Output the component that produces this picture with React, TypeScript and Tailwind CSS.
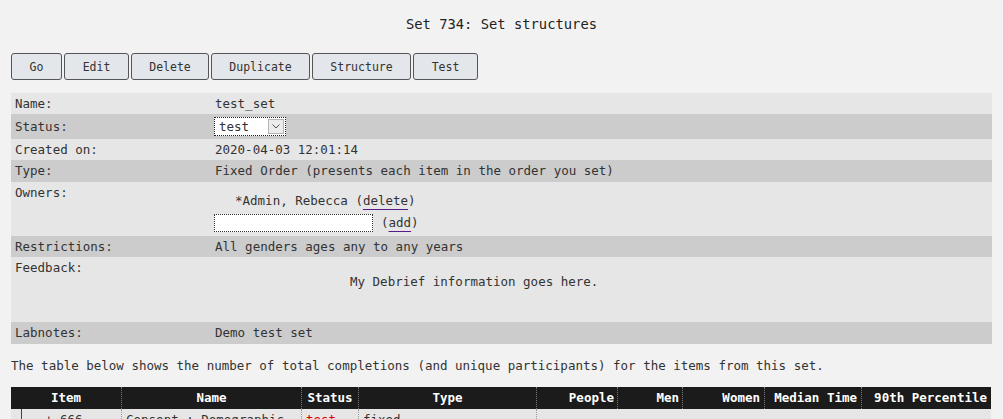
import React from "react";

const buttons: { label: string; w: string }[] = [
  { label: "Go", w: "w-[51px]" },
  { label: "Edit", w: "w-[65px]" },
  { label: "Delete", w: "w-[78px]" },
  { label: "Duplicate", w: "w-[99px]" },
  { label: "Structure", w: "w-[99px]" },
  { label: "Test", w: "w-[65px]" },
];

function Row({
  label,
  dark,
  h,
  children,
  top,
}: {
  label: string;
  dark?: boolean;
  h: string;
  children?: React.ReactNode;
  top?: boolean;
}) {
  return (
    <div className={`flex ${h} ${dark ? "bg-[#cccccc]" : "bg-[#e6e6e6]"}`}>
      <div className={`w-[200px] shrink-0 pl-[4px] flex ${top ? "items-start pt-[2px]" : "items-center"}`}>
        {label}
      </div>
      <div className={`flex-1 pl-[4px] flex ${top ? "flex-col" : "items-center"}`}>{children}</div>
    </div>
  );
}

const headers: { label: string; align: string }[] = [
  { label: "Item", align: "justify-center" },
  { label: "Name", align: "justify-center" },
  { label: "Status", align: "justify-center" },
  { label: "Type", align: "justify-center" },
  { label: "People", align: "justify-end pr-[3px]" },
  { label: "Men", align: "justify-end pr-[3px]" },
  { label: "Women", align: "justify-end pr-[4px]" },
  { label: "Median Time", align: "justify-end pr-[4px]" },
  { label: "90th Percentile", align: "justify-end pr-[4px]" },
];

export default function App() {
  return (
    <div className="min-h-screen bg-[#f2f2f2] px-[11px] text-[#333] font-['DejaVu_Sans_Mono',monospace] text-[12.5px] leading-[18px]">
      <h1 className="h-[47px] flex items-center justify-center text-[13.8px] text-[#222] font-normal">
        Set 734: Set structures
      </h1>
      <div className="mt-[6px] flex gap-[2px]">
        {buttons.map((b) => (
          <button
            key={b.label}
            className={`${b.w} h-[27px] border border-[#555] rounded-[3px] bg-[#e3e6ea] text-[11.5px] text-[#333] flex items-center justify-center`}
          >
            {b.label}
          </button>
        ))}
      </div>

      <div className="mt-[13px] flex flex-col">
        <Row label="Name:" h="h-[21px]">
          test_set
        </Row>
        <Row label="Status:" h="h-[25px]" dark>
          <div className="ml-[-1px] w-[72px] h-[19px] bg-white border border-dotted border-[#222] flex items-center justify-between pl-[4px] pr-[1px]">
            <span>test</span>
            <span className="w-[16px] h-[15px] bg-[#ececec] border border-[#b5b5b5] flex items-center justify-center">
              <svg width="8" height="5" viewBox="0 0 8 5">
                <path d="M0.5 0.5 L4 4 L7.5 0.5" fill="none" stroke="#555" strokeWidth="1" />
              </svg>
            </span>
          </div>
        </Row>
        <Row label="Created on:" h="h-[21px]">
          2020-04-03 12:01:14
        </Row>
        <Row label="Type:" h="h-[22px]" dark>
          Fixed Order (presents each item in the order you set)
        </Row>
        <Row label="Owners:" h="h-[54px]" top>
          <div className="pt-[10px] pl-[20px]">
            *Admin, Rebecca (
            <span className="underline decoration-[#551a8b] underline-offset-[4px]">delete</span>)
          </div>
          <div className="mt-[4px] flex items-center ml-[-1px]">
            <span className="w-[159px] h-[18px] bg-white border border-dotted border-[#333]"></span>
            <span className="ml-[8px]">
              (<span className="underline decoration-[#551a8b] underline-offset-[4px]">add</span>)
            </span>
          </div>
        </Row>
        <Row label="Restrictions:" h="h-[21px]" dark>
          All genders ages any to any years
        </Row>
        <Row label="Feedback:" h="h-[65px]" top>
          <div className="pt-[16px] pl-[135px]">My Debrief information goes here.</div>
        </Row>
        <Row label="Labnotes:" h="h-[22px]" dark>
          Demo test set
        </Row>
      </div>

      <p className="mt-[13px]">
        The table below shows the number of total completions (and unique participants) for the items from this set.
      </p>

      <div className="mt-[12px] grid grid-cols-[110px_180px_57px_178px_81px_65px_82px_97px_130px]">
        {headers.map((h, i) => (
          <div
            key={h.label}
            className={`h-[22px] bg-[#1b1b1b] text-white font-bold flex items-center ${h.align} ${
              i > 0 ? "border-l border-dotted border-[#777]" : ""
            }`}
          >
            {h.label}
          </div>
        ))}
        <div className="h-[22px] bg-[#e6e6e6] flex items-center pl-[10px]">
          <span className="w-px h-[12px] bg-[#d00] self-start"></span>
          <span className="ml-[23px]">+ 666</span>
        </div>
        <div className="h-[22px] bg-[#e6e6e6] flex items-center pl-[4px] border-l border-dotted border-[#999]">
          Consent : Demographic
        </div>
        <div className="h-[22px] bg-[#e6e6e6] flex items-center pl-[4px] text-[#d00] border-l border-dotted border-[#999]">
          test
        </div>
        <div className="h-[22px] bg-[#e6e6e6] flex items-center pl-[4px] border-l border-dotted border-[#999]">
          fixed
        </div>
        <div className="h-[22px] bg-[#e6e6e6] border-l border-dotted border-[#999]"></div>
        <div className="h-[22px] bg-[#e6e6e6]"></div>
        <div className="h-[22px] bg-[#e6e6e6]"></div>
        <div className="h-[22px] bg-[#e6e6e6]"></div>
        <div className="h-[22px] bg-[#e6e6e6]"></div>
      </div>
    </div>
  );
}
